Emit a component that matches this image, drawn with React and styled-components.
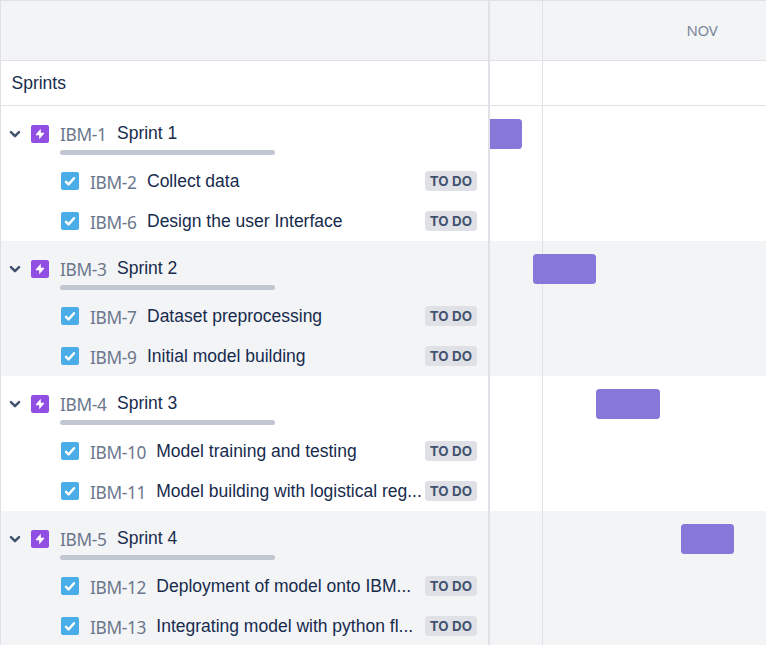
import React from "react";
import styled, { createGlobalStyle } from "styled-components";

const GlobalStyle = createGlobalStyle`
  * { box-sizing: border-box; }
  body {
    margin: 0;
    background: #fff;
    font-family: "Liberation Sans", Arial, sans-serif;
    color: #172b4d;
    overflow: hidden;
  }
`;

const Roadmap = styled.main`
  display: grid;
  grid-template-columns: 490px 1fr;
  width: 100vw;
  height: 645px;
  overflow: hidden;
  border-top: 1px solid #dfe1e6;
`;

const IssuePanel = styled.section`
  border-left: 1px solid #dfe1e6;
  border-right: 2px solid #dfe1e6;
  min-width: 0;
`;

const PanelHeader = styled.div`
  height: 60px;
  background: #f3f4f6;
  border-bottom: 1px solid #dfe1e6;
`;

const SprintsHeading = styled.h2`
  display: flex;
  align-items: center;
  height: 45px;
  margin: 0;
  padding: 1px 0 0 10.5px;
  border-bottom: 1px solid #dfe1e6;
  font-size: 17.5px;
  font-weight: 400;
`;

const Group = styled.div`
  height: 135px;
  background: ${(p) => (p.$shaded ? "#f3f4f6" : "#fff")};
`;

const SprintRow = styled.div`
  display: grid;
  grid-template-columns: 28px 31px 215px;
  height: 55px;
  padding-top: 14px;
  align-items: start;
`;

const IconSlot = styled.span`
  display: flex;
  height: 28px;
  align-items: center;
  padding-left: ${(p) => p.$inset}px;
`;

const SprintBody = styled.div`
  display: flex;
  flex-direction: column;
`;

const SprintLabel = styled.div`
  display: flex;
  height: 30px;
`;

const Progress = styled.div`
  height: 5px;
  border-radius: 2.5px;
  background: #c1c7d0;
`;

const IssueKey = styled.span`
  flex: none;
  width: ${(p) => p.$width}px;
  padding-top: 2px;
  font-family: "Noto Sans", "Open Sans", sans-serif;
  font-weight: 400;
  font-size: 17.3px;
  letter-spacing: -0.35px;
  line-height: 26px;
  white-space: nowrap;
  color: #6b778c;
`;

const Title = styled.span`
  flex: 1;
  min-width: 0;
  font-size: 17.5px;
  line-height: 26px;
  white-space: nowrap;
`;

const TaskRow = styled.div`
  display: flex;
  height: 40px;
  padding: 7px 11px 0 60px;
`;

const TaskIconSlot = styled.span`
  display: flex;
  align-items: center;
  flex: none;
  width: 29px;
  height: 26px;
`;

const Status = styled.span`
  flex: none;
  width: 52px;
  height: 20px;
  margin-top: 3px;
  border-radius: 3.5px;
  background: #dfe1e6;
  color: #42526e;
  font-family: Inter, sans-serif;
  font-weight: 700;
  font-size: 13.4px;
  letter-spacing: 0.1px;
  line-height: 20px;
  text-align: center;
  white-space: nowrap;
`;

const Timeline = styled.section`
  min-width: 0;
`;

const MonthHeader = styled.div`
  display: grid;
  grid-template-columns: 53px 1fr;
  height: 60px;
  background: #f3f4f6;
  border-bottom: 1px solid #dfe1e6;
`;

const MonthCell = styled.div`
  border-right: ${(p) => (p.$divider ? "1px solid #dfe1e6" : "0")};
  padding: 18px 0 0 ${(p) => (p.$divider ? 0 : 143.5)}px;
  font-family: "Noto Sans", "Open Sans", sans-serif;
  font-weight: 400;
  font-size: 15px;
  letter-spacing: -0.3px;
  line-height: 22px;
  color: #7a869a;
`;

const Lane = styled.div`
  height: ${(p) => (p.$heading ? 45 : 135)}px;
  padding-top: ${(p) => (p.$heading ? 0 : 13)}px;
  border-bottom: ${(p) => (p.$heading ? "1px solid #dfe1e6" : "0")};
  background: linear-gradient(#dfe1e6, #dfe1e6) 52px 0 / 1px 100% no-repeat
    ${(p) => (p.$shaded ? "#f3f4f6" : "#fff")};
`;

const Bar = styled.div`
  width: ${(p) => p.$width}px;
  height: 29.7px;
  margin-left: ${(p) => p.$start}px;
  border-radius: ${(p) => (p.$clipped ? "0 3.5px 3.5px 0" : "3.5px")};
  background: #8777d9;
`;

const Chevron = () => (
  <svg width="12" height="8" viewBox="0 0 12 8" fill="none">
    <path d="M2 2.2 6 6.1 10 2.2" stroke="#42526e" strokeWidth="2.5" strokeLinecap="round" strokeLinejoin="round" />
  </svg>
);

const EpicIcon = () => (
  <svg width="18" height="18" viewBox="0 0 18 18">
    <rect width="18" height="18" rx="2" fill="#904ee2" />
    <path d="M9.8 3.8 4.8 9.5q-.2.7.4.8h3V14.2L13.2 8.6q.3-.7-.4-.8h-3z" fill="#fff" />
  </svg>
);

const TaskIcon = () => (
  <svg width="18" height="18" viewBox="0 0 18 18" fill="none">
    <rect width="18" height="18" rx="2" fill="#4bade8" />
    <path d="m5 9.8 2.6 2.6L13 6.2" stroke="#fff" strokeWidth="2.4" strokeLinecap="round" strokeLinejoin="round" />
  </svg>
);

const sprints = [
  {
    key: "IBM-1", name: "Sprint 1", start: 0, width: 31.7, clipped: true,
    tasks: [["IBM-2", "Collect data"], ["IBM-6", "Design the user Interface"]],
  },
  {
    key: "IBM-3", name: "Sprint 2", start: 42.7, width: 63.3,
    tasks: [["IBM-7", "Dataset preprocessing"], ["IBM-9", "Initial model building"]],
  },
  {
    key: "IBM-4", name: "Sprint 3", start: 106.4, width: 63.6,
    tasks: [["IBM-10", "Model training and testing"], ["IBM-11", "Model building with logistical reg..."]],
  },
  {
    key: "IBM-5", name: "Sprint 4", start: 191.3, width: 52.9,
    tasks: [["IBM-12", "Deployment of model onto IBM..."], ["IBM-13", "Integrating model with python fl..."]],
  },
];

export default function App() {
  return (
    <>
      <GlobalStyle />
      <Roadmap>
        <IssuePanel>
          <PanelHeader />
          <SprintsHeading>Sprints</SprintsHeading>
          {sprints.map((s, i) => (
            <Group key={s.key} $shaded={i % 2 === 1}>
              <SprintRow>
                <IconSlot $inset={8}><Chevron /></IconSlot>
                <IconSlot $inset={2}><EpicIcon /></IconSlot>
                <SprintBody>
                  <SprintLabel>
                    <IssueKey $width={57}>{s.key}</IssueKey>
                    <Title>{s.name}</Title>
                  </SprintLabel>
                  <Progress />
                </SprintBody>
              </SprintRow>
              {s.tasks.map(([key, title]) => (
                <TaskRow key={key}>
                  <TaskIconSlot><TaskIcon /></TaskIconSlot>
                  <IssueKey $width={key.length > 5 ? 66.3 : 57}>{key}</IssueKey>
                  <Title>{title}</Title>
                  <Status>TO DO</Status>
                </TaskRow>
              ))}
            </Group>
          ))}
        </IssuePanel>
        <Timeline>
          <MonthHeader>
            <MonthCell $divider />
            <MonthCell>NOV</MonthCell>
          </MonthHeader>
          <Lane $heading />
          {sprints.map((s, i) => (
            <Lane key={s.key} $shaded={i % 2 === 1}>
              <Bar $start={s.start} $width={s.width} $clipped={s.clipped} />
            </Lane>
          ))}
        </Timeline>
      </Roadmap>
    </>
  );
}
